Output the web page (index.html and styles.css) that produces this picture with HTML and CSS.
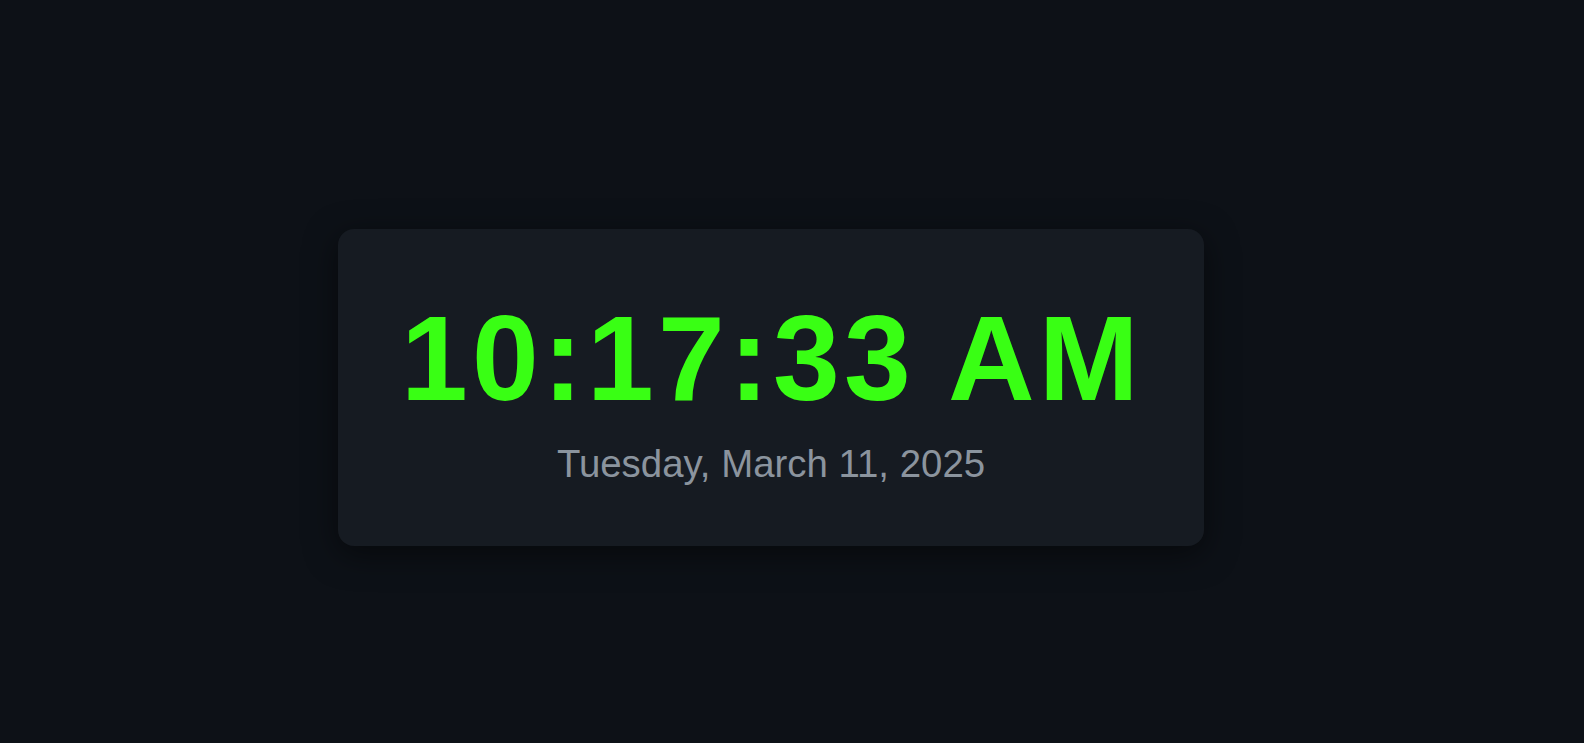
FILE: index.html
```html
<!DOCTYPE html>
<html lang="en">
<head>
<meta charset="utf-8">
<title>Digital Clock</title>
<link rel="stylesheet" href="styles.css">
</head>
<body>
<main class="stage">
  <section class="clock-card">
    <div class="clock-time">10:17:33 AM</div>
    <div class="clock-date">Tuesday, March 11, 2025</div>
  </section>
</main>
</body>
</html>
```
FILE: styles.css
```css
html, body {
  margin: 0;
  padding: 0;
  background: #0d1117;
}
body {
  font-family: "Liberation Sans", Arial, sans-serif;
}
.stage {
  box-sizing: border-box;
  min-height: 100vh;
  display: flex;
  align-items: center;
  justify-content: center;
  padding: 32px 42px 0 0;
}
.clock-card {
  background: #161b22;
  border-radius: 16px;
  box-shadow: 0 8px 32px rgba(0, 0, 0, 0.5);
  padding: 69px 63px 59px 63px;
  display: flex;
  flex-direction: column;
  align-items: center;
}
.clock-time {
  color: #39ff14;
  font-size: 120px;
  font-weight: 700;
  line-height: 1;
  letter-spacing: 4.2px;
  margin-right: -2px;
}
.clock-date {
  margin-top: 23px;
  color: #8b949e;
  font-size: 38.4px;
  line-height: 1.2;
}
```
